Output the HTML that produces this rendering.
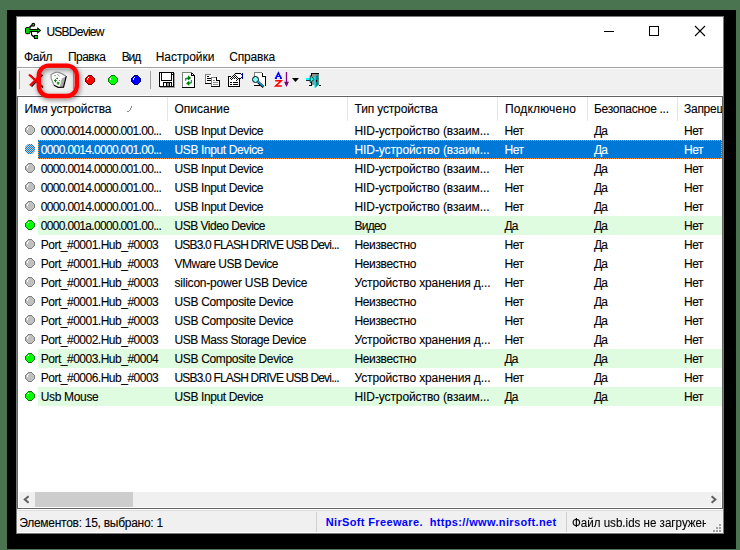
<!DOCTYPE html><html><head><meta charset="utf-8"><style>
html,body{margin:0;padding:0;width:740px;height:550px;overflow:hidden;background:#4a7450;position:relative}
.a{position:absolute}
.t{position:absolute;font-family:"Liberation Sans",sans-serif;font-size:12px;line-height:14px;white-space:pre;transform-origin:0 0;-webkit-text-stroke:0.1px currentColor}
svg{position:absolute;overflow:visible}
</style></head><body>
<div class="a" style="left:7px;top:10px;width:729px;height:539px;background:#000;"></div>
<div class="a" style="left:16px;top:16px;width:708px;height:518px;background:#7a7a7a;"></div>
<div class="a" style="left:17px;top:17px;width:706px;height:516px;background:#fff;"></div>
<div class="a" style="left:17px;top:67px;width:706px;height:1px;background:#a0a0a0;"></div>
<div class="a" style="left:18px;top:69px;width:704px;height:26px;background:#f0f0f0;"></div>
<div class="a" style="left:17px;top:96px;width:706px;height:413px;background:#646464;"></div>
<div class="a" style="left:18px;top:97px;width:704px;height:411px;background:#fff;"></div>
<div class="a" style="left:167px;top:97px;width:1px;height:24px;background:#e5e5e5;"></div>
<div class="a" style="left:347px;top:97px;width:1px;height:24px;background:#e5e5e5;"></div>
<div class="a" style="left:497px;top:97px;width:1px;height:24px;background:#e5e5e5;"></div>
<div class="a" style="left:587px;top:97px;width:1px;height:24px;background:#e5e5e5;"></div>
<div class="a" style="left:677px;top:97px;width:1px;height:24px;background:#e5e5e5;"></div>
<div class="a" style="left:38px;top:140px;width:684px;height:19px;background:#0078d7;"></div>
<div class="a" style="left:38px;top:216px;width:684px;height:19px;background:#e0fce0;"></div>
<div class="a" style="left:38px;top:349px;width:684px;height:19px;background:#e0fce0;"></div>
<div class="a" style="left:38px;top:387px;width:684px;height:19px;background:#e0fce0;"></div>
<div class="a" style="left:19px;top:492px;width:702px;height:15px;background:#f0f0f0;"></div>
<div class="a" style="left:35px;top:492px;width:98px;height:15px;background:#cdcdcd;"></div>
<div class="a" style="left:17px;top:510px;width:706px;height:1px;background:#dcdcdc;"></div>
<div class="a" style="left:17px;top:511px;width:706px;height:21px;background:#f0f0f0;"></div>
<div class="a" style="left:316px;top:512px;width:1px;height:20px;background:#d0d0d0;"></div>
<div class="a" style="left:566px;top:512px;width:1px;height:20px;background:#d0d0d0;"></div>
<svg width="740" height="550" style="left:0;top:0">
<defs>
<g id="bg" shape-rendering="crispEdges"><rect x="3" y="1" width="4" height="1" fill="#c0c0c0"/><rect x="2" y="2" width="6" height="1" fill="#c0c0c0"/><rect x="1" y="3" width="8" height="1" fill="#c0c0c0"/><rect x="1" y="4" width="8" height="1" fill="#c0c0c0"/><rect x="1" y="5" width="8" height="1" fill="#c0c0c0"/><rect x="1" y="6" width="8" height="1" fill="#c0c0c0"/><rect x="2" y="7" width="6" height="1" fill="#c0c0c0"/><rect x="3" y="8" width="4" height="1" fill="#c0c0c0"/><path d="M3 0h1v1h-1zM4 0h1v1h-1zM5 0h1v1h-1zM6 0h1v1h-1zM2 1h1v1h-1zM7 1h1v1h-1zM1 2h1v1h-1zM8 2h1v1h-1zM0 3h1v1h-1zM0 4h1v1h-1zM0 5h1v1h-1zM0 6h1v1h-1zM9 3h1v1h-1zM9 4h1v1h-1zM9 5h1v1h-1zM9 6h1v1h-1zM1 7h1v1h-1zM8 7h1v1h-1zM2 8h1v1h-1zM7 8h1v1h-1zM3 9h1v1h-1zM4 9h1v1h-1zM5 9h1v1h-1zM6 9h1v1h-1z" fill="#808080"/><path d="M3 2h1v1h-1zM2 3h1v2h-1z" fill="#fff"/></g>
<g id="bgr" shape-rendering="crispEdges"><rect x="3" y="1" width="4" height="1" fill="#00ff00"/><rect x="2" y="2" width="6" height="1" fill="#00ff00"/><rect x="1" y="3" width="8" height="1" fill="#00ff00"/><rect x="1" y="4" width="8" height="1" fill="#00ff00"/><rect x="1" y="5" width="8" height="1" fill="#00ff00"/><rect x="1" y="6" width="8" height="1" fill="#00ff00"/><rect x="2" y="7" width="6" height="1" fill="#00ff00"/><rect x="3" y="8" width="4" height="1" fill="#00ff00"/><path d="M3 0h1v1h-1zM4 0h1v1h-1zM5 0h1v1h-1zM6 0h1v1h-1zM2 1h1v1h-1zM7 1h1v1h-1zM1 2h1v1h-1zM8 2h1v1h-1zM0 3h1v1h-1zM0 4h1v1h-1zM0 5h1v1h-1zM0 6h1v1h-1zM9 3h1v1h-1zM9 4h1v1h-1zM9 5h1v1h-1zM9 6h1v1h-1zM1 7h1v1h-1zM8 7h1v1h-1zM2 8h1v1h-1zM7 8h1v1h-1zM3 9h1v1h-1zM4 9h1v1h-1zM5 9h1v1h-1zM6 9h1v1h-1z" fill="#008000"/><path d="M3 2h1v1h-1zM2 3h1v2h-1z" fill="#fff"/></g>
<g id="bred" shape-rendering="crispEdges"><rect x="3" y="1" width="4" height="1" fill="#ff0000"/><rect x="2" y="2" width="6" height="1" fill="#ff0000"/><rect x="1" y="3" width="8" height="1" fill="#ff0000"/><rect x="1" y="4" width="8" height="1" fill="#ff0000"/><rect x="1" y="5" width="8" height="1" fill="#ff0000"/><rect x="1" y="6" width="8" height="1" fill="#ff0000"/><rect x="2" y="7" width="6" height="1" fill="#ff0000"/><rect x="3" y="8" width="4" height="1" fill="#ff0000"/><path d="M3 0h1v1h-1zM4 0h1v1h-1zM5 0h1v1h-1zM6 0h1v1h-1zM2 1h1v1h-1zM7 1h1v1h-1zM1 2h1v1h-1zM8 2h1v1h-1zM0 3h1v1h-1zM0 4h1v1h-1zM0 5h1v1h-1zM0 6h1v1h-1zM9 3h1v1h-1zM9 4h1v1h-1zM9 5h1v1h-1zM9 6h1v1h-1zM1 7h1v1h-1zM8 7h1v1h-1zM2 8h1v1h-1zM7 8h1v1h-1zM3 9h1v1h-1zM4 9h1v1h-1zM5 9h1v1h-1zM6 9h1v1h-1z" fill="#800000"/><path d="M3 2h1v1h-1zM2 3h1v2h-1z" fill="#fff"/></g>
<g id="bblue" shape-rendering="crispEdges"><rect x="3" y="1" width="4" height="1" fill="#0000ff"/><rect x="2" y="2" width="6" height="1" fill="#0000ff"/><rect x="1" y="3" width="8" height="1" fill="#0000ff"/><rect x="1" y="4" width="8" height="1" fill="#0000ff"/><rect x="1" y="5" width="8" height="1" fill="#0000ff"/><rect x="1" y="6" width="8" height="1" fill="#0000ff"/><rect x="2" y="7" width="6" height="1" fill="#0000ff"/><rect x="3" y="8" width="4" height="1" fill="#0000ff"/><path d="M3 0h1v1h-1zM4 0h1v1h-1zM5 0h1v1h-1zM6 0h1v1h-1zM2 1h1v1h-1zM7 1h1v1h-1zM1 2h1v1h-1zM8 2h1v1h-1zM0 3h1v1h-1zM0 4h1v1h-1zM0 5h1v1h-1zM0 6h1v1h-1zM9 3h1v1h-1zM9 4h1v1h-1zM9 5h1v1h-1zM9 6h1v1h-1zM1 7h1v1h-1zM8 7h1v1h-1zM2 8h1v1h-1zM7 8h1v1h-1zM3 9h1v1h-1zM4 9h1v1h-1zM5 9h1v1h-1zM6 9h1v1h-1z" fill="#000080"/><path d="M3 2h1v1h-1zM2 3h1v2h-1z" fill="#fff"/></g>
<pattern id="dith" width="2" height="2" patternUnits="userSpaceOnUse"><rect width="2" height="2" fill="#0078d7"/><rect x="1" y="0" width="1" height="1" fill="#c8c8d0"/><rect x="0" y="1" width="1" height="1" fill="#c8c8d0"/></pattern>
<filter id="sh" x="-30%" y="-30%" width="160%" height="160%"><feGaussianBlur in="SourceAlpha" stdDeviation="1.6"/><feOffset dx="1" dy="2"/><feComponentTransfer><feFuncA type="linear" slope="0.45"/></feComponentTransfer><feMerge><feMergeNode/><feMergeNode in="SourceGraphic"/></feMerge></filter>
</defs>
<path d="M29.5 27.5L32 25" stroke="#000" stroke-width="1.7" fill="none"/>
<circle cx="33.3" cy="24.8" r="1.4" fill="#00e000" stroke="#000" stroke-width="1.1"/>
<rect x="25.5" y="27.5" width="4.6" height="6.2" rx="1.3" fill="#00d000" stroke="#000" stroke-width="1"/>
<g shape-rendering="crispEdges"><rect x="30" y="29" width="8" height="3" fill="#000"/><rect x="29" y="30" width="9" height="1" fill="#00c000"/></g>
<path d="M37.2 27L41.2 30.5L37.2 34Z" fill="#000"/><path d="M38 29.3L39.5 30.5L38 31.7Z" fill="#00e000"/>
<g shape-rendering="crispEdges"><rect x="31" y="32" width="1" height="3" fill="#000"/></g>
<path d="M31.5 34.8L34.3 37.2" stroke="#000" stroke-width="1.5" fill="none"/>
<g shape-rendering="crispEdges"><rect x="34" y="35" width="4" height="4" fill="#000"/><rect x="35" y="36" width="2" height="2" fill="#00e000"/></g>
<g shape-rendering="crispEdges"><rect x="604" y="31" width="10" height="1" fill="#000"/>
<rect x="649.5" y="26.5" width="9" height="9" fill="none" stroke="#000" stroke-width="1"/></g>
<path d="M695 26L705 36M705 26L695 36" stroke="#000" stroke-width="1.1" fill="none"/>
<g shape-rendering="crispEdges">
<rect x="19" y="71" width="1" height="18" fill="#a0a0a0"/>
<rect x="73" y="71" width="1" height="18" fill="#a0a0a0"/>
<rect x="150" y="71" width="1" height="18" fill="#a0a0a0"/>
</g>
<path d="M30.5 75.5L43 87.5M42.5 75L31.5 86.5" stroke="#000" stroke-width="1.6" fill="none"/>
<path d="M29 74.5L42 86.5M41.5 74L30 85.5" stroke="#f00" stroke-width="2.2" fill="none"/>
<path d="M51 74.5L55.5 72.3L58.5 72.3L65.8 76.2L63.3 87.3L58.2 87.5L54 85L51.2 78.4Z" fill="#fff"/>
<path d="M65.8 76.5L61.8 78.5L59.8 86.8L63.3 87.3Z" fill="#a8a8a8"/>
<path d="M54 85.2L51.2 78.4L51 74.5L55.5 72.3L58.5 72.3L62.5 74L65.8 76" stroke="#8a8a8a" stroke-width="1.1" fill="none"/>
<path d="M66.3 76.2L63.5 87.2L58.2 87.3L54 85.2" stroke="#000" stroke-width="1.2" fill="none"/>
<path d="M54 75.7h2M57.3 74l2.3 2.5" stroke="#9a9a9a" stroke-width="1" fill="none"/>
<path d="M54.2 80.5h2.5M55.4 79.2v3M56.7 83h3M58.1 81.8v3M56.4 78.3h1.6M59.6 80v0.8" stroke="#008000" stroke-width="1.2" fill="none"/>
<use href="#bred" x="85" y="75"/><use href="#bgr" x="108" y="75"/><use href="#bblue" x="131" y="75"/>
<g shape-rendering="crispEdges">
<rect x="174" y="73" width="1" height="15" fill="#a0a0a0"/><rect x="160" y="87" width="15" height="1" fill="#a0a0a0"/>
<rect x="159" y="72" width="15" height="15" fill="#000"/>
<rect x="160" y="73" width="1" height="13" fill="#fff"/><rect x="162" y="73" width="9" height="7" fill="#fff"/>
<rect x="160" y="81" width="13" height="1" fill="#fff"/><rect x="160" y="82" width="3" height="4" fill="#fff"/>
<rect x="172" y="75" width="1" height="11" fill="#fff"/><rect x="172" y="73" width="1" height="1" fill="#fff"/>
<rect x="164" y="83" width="2" height="3" fill="#fff"/><rect x="167" y="83" width="2" height="3" fill="#909090"/><rect x="170" y="83" width="1" height="3" fill="#fff"/>
</g>
<g shape-rendering="crispEdges">
<path d="M182 72h10l3 3v13h-13z" fill="#fff"/>
<rect x="182" y="72" width="1" height="16" fill="#808080"/><rect x="182" y="72" width="10" height="1" fill="#808080"/>
<rect x="194" y="75" width="1" height="13" fill="#000"/><rect x="182" y="87" width="13" height="1" fill="#000"/>
<rect x="191" y="73" width="1" height="3" fill="#000"/><rect x="191" y="75" width="4" height="1" fill="#000"/><rect x="192" y="73" width="1" height="1" fill="#000"/><rect x="193" y="74" width="1" height="1" fill="#000"/>
</g>
<path d="M185.6 80.8V78.6h1.2" stroke="#1a8aa0" stroke-width="1.3" fill="none"/><path d="M191.4 80v2.6h-1.2" stroke="#1a8aa0" stroke-width="1.3" fill="none"/>
<path d="M186.5 78.4H189.5M187.5 83.2H190.5" stroke="#008000" stroke-width="1.6" fill="none"/>
<path d="M188 75.3L191.2 77.9L188 80.5Z" fill="#008000"/><path d="M189.3 80.7L186 83.3L189.3 85.9Z" fill="#008000"/>
<g shape-rendering="crispEdges">
<path d="M205 74h6l2 2v8h-8z" fill="#fff"/>
<rect x="205" y="74" width="1" height="10" fill="#808080"/><rect x="205" y="74" width="6" height="1" fill="#808080"/><rect x="205" y="83" width="6" height="1" fill="#000"/>
<rect x="207" y="76" width="2" height="1" fill="#000"/><rect x="207" y="78" width="4" height="1" fill="#000"/><rect x="207" y="80" width="4" height="1" fill="#000"/>
<path d="M211 77h6l3 3v7h-9z" fill="#fff"/>
<rect x="211" y="77" width="1" height="10" fill="#808080"/><rect x="211" y="77" width="6" height="1" fill="#808080"/>
<rect x="219" y="80" width="1" height="7" fill="#000"/><rect x="211" y="86" width="9" height="1" fill="#000"/>
<rect x="216" y="77" width="1" height="3" fill="#000"/><rect x="216" y="80" width="3" height="1" fill="#000"/>
<rect x="213" y="80" width="2" height="1" fill="#909090"/><rect x="213" y="82" width="5" height="1" fill="#909090"/><rect x="213" y="84" width="5" height="1" fill="#909090"/>
</g>
<g shape-rendering="crispEdges">
<rect x="228" y="76" width="12" height="11" fill="#000"/><rect x="229" y="77" width="10" height="9" fill="#fff"/>
<rect x="231" y="76" width="8" height="1" fill="#fff"/><rect x="239" y="76" width="1" height="2" fill="#f0f0f0"/>
<rect x="230" y="82" width="2" height="1" fill="#000"/><rect x="233" y="82" width="5" height="1" fill="#000"/><rect x="230" y="84" width="2" height="1" fill="#000"/><rect x="233" y="84" width="5" height="1" fill="#000"/>
<rect x="235" y="73" width="6" height="1" fill="#000"/><rect x="236" y="74" width="5" height="4" fill="#fff"/><rect x="238" y="78" width="3" height="1" fill="#000"/><rect x="241" y="74" width="1" height="1" fill="#000"/><rect x="241" y="77" width="1" height="1" fill="#000"/><rect x="242" y="73" width="1" height="6" fill="#000090"/>
<path d="M230 78h1v1h-1zM231 77h1v1h-1zM231 79h1v1h-1zM232 76h1v1h-1zM232 78h1v1h-1zM233 75h1v1h-1zM233 77h1v1h-1zM234 74h1v1h-1zM234 76h1v1h-1zM234 78h1v1h-1zM235 75h1v1h-1zM235 77h1v1h-1zM236 76h1v1h-1zM236 78h1v1h-1zM236 80h1v1h-1zM237 77h1v1h-1zM237 79h1v1h-1zM238 78h1v1h-1z" fill="#000"/>
</g>
<g shape-rendering="crispEdges">
<path d="M254 72h8l4 4v10h-12z" fill="#fff"/>
<rect x="254" y="72" width="8" height="1" fill="#808080"/><rect x="254" y="72" width="1" height="5" fill="#808080"/>
<rect x="265" y="76" width="1" height="10" fill="#000"/><rect x="254" y="85" width="6" height="1" fill="#000"/>
<rect x="262" y="73" width="1" height="3" fill="#000"/><rect x="262" y="76" width="3" height="1" fill="#000"/>
</g>
<circle cx="255.5" cy="79.5" r="3" fill="#80ffff" stroke="#000" stroke-width="1"/>
<path d="M258 82l5.5 5" stroke="#000" stroke-width="2.4"/><path d="M258 81.6l5.5 5" stroke="#00c0ff" stroke-width="1.2"/>
<path d="M275.6 78.3L278.4 72.8L281.2 78.3" stroke="#0000ff" stroke-width="1.5" fill="none"/><path d="M274.8 78.4h2.2M279.8 78.4h2.2M276.7 76.5h3.4" stroke="#0000ff" stroke-width="1.1"/>
<path d="M275.2 80.8h6L275.6 86.1h6.2" stroke="#ff0000" stroke-width="1.5" fill="none"/>
<path d="M286.5 72v13" stroke="#800080" stroke-width="1.3"/><path d="M284 81.8l2.5 5.1l2.5-5.1z" fill="#800080"/>
<path d="M292 78h7l-3.5 4z" fill="#000"/>
<g shape-rendering="crispEdges">
<rect x="311" y="73" width="8" height="1" fill="#000"/><rect x="311" y="73" width="1" height="3" fill="#000"/><rect x="311" y="82" width="1" height="4" fill="#000"/>
<rect x="309" y="85" width="3" height="1" fill="#000"/><rect x="319" y="85" width="2" height="1" fill="#000"/>
<rect x="312" y="74" width="7" height="11" fill="#909090"/>
</g>
<path d="M315 76.5l3.5-2.5v11l-3.5 3z" fill="#008c8c"/><path d="M315 76.5v11.5" stroke="#00ffff" stroke-width="1.2"/><rect x="316" y="80" width="1" height="2" fill="#000" shape-rendering="crispEdges"/>
<path d="M306 79.6h5" stroke="#000" stroke-width="2.6"/><path d="M306 79h5" stroke="#00ffff" stroke-width="2.2"/><path d="M310.2 75.6l4 3.6l-4 3.6z" fill="#00ffff" stroke="#000" stroke-width="0.7"/>
<path d="M127 111h2v1h-2zM129 110h1v1h-1zM130 108h1v2h-1zM131 106h1v2h-1z" fill="#8a8a8a" shape-rendering="crispEdges"/>
<use href="#bg" x="25" y="125"/>
<g transform="translate(25 144)"><use href="#bg"/><path d="M3 0h4l3 3v4l-3 3h-4l-3-3v-4z" fill="url(#dith)" opacity="0.9"/></g>
<use href="#bg" x="25" y="163"/>
<use href="#bg" x="25" y="182"/>
<use href="#bg" x="25" y="201"/>
<use href="#bgr" x="25" y="220"/>
<use href="#bg" x="25" y="239"/>
<use href="#bg" x="25" y="258"/>
<use href="#bg" x="25" y="277"/>
<use href="#bg" x="25" y="296"/>
<use href="#bg" x="25" y="315"/>
<use href="#bg" x="25" y="334"/>
<use href="#bgr" x="25" y="353"/>
<use href="#bg" x="25" y="372"/>
<use href="#bgr" x="25" y="391"/>
<rect x="38.5" y="140.5" width="683" height="18" fill="none" stroke="#ff9a3c" stroke-width="1" stroke-dasharray="1 1" shape-rendering="crispEdges"/>
<path d="M28.6 496.3L24.8 499.5L28.6 502.7" stroke="#606060" stroke-width="2" fill="none"/>
<path d="M711.6 496.3L715.4 499.5L711.6 502.7" stroke="#606060" stroke-width="2" fill="none"/>
<g fill="#a0a0a0" shape-rendering="crispEdges">
<rect x="719" y="524" width="2" height="2"/>
<rect x="716" y="527" width="2" height="2"/>
<rect x="719" y="527" width="2" height="2"/>
<rect x="713" y="530" width="2" height="2"/>
<rect x="716" y="530" width="2" height="2"/>
<rect x="719" y="530" width="2" height="2"/>
</g>
</svg>
<div class="t" style="left:46.40px;top:25.44px;color:#000;letter-spacing:-0.754px;">USBDeview</div>
<div class="t" style="left:24.10px;top:50.44px;color:#000;letter-spacing:-0.372px;">Файл</div>
<div class="t" style="left:67.90px;top:50.44px;color:#000;letter-spacing:-0.509px;">Правка</div>
<div class="t" style="left:121.70px;top:50.44px;color:#000;letter-spacing:-1.109px;">Вид</div>
<div class="t" style="left:155.70px;top:50.44px;color:#000;">Настройки</div>
<div class="t" style="left:229.20px;top:50.44px;color:#000;letter-spacing:-0.180px;">Справка</div>
<div class="t" style="left:24.50px;top:101.54px;color:#000;letter-spacing:-0.118px;">Имя устройства</div>
<div class="t" style="left:174.50px;top:101.54px;color:#000;">Описание</div>
<div class="t" style="left:354.60px;top:101.54px;color:#000;letter-spacing:-0.167px;">Тип устройства</div>
<div class="t" style="left:504.90px;top:101.54px;color:#000;letter-spacing:0.179px;">Подключено</div>
<div class="t" style="left:594.00px;top:101.54px;color:#000;letter-spacing:-0.293px;">Безопасное ...</div>
<div class="t" style="left:684.00px;top:101.54px;color:#000;letter-spacing:-0.270px;">Запрещ</div>
<div class="t" style="left:40.80px;top:124.34px;color:#000;letter-spacing:-0.687px;">0000.0014.0000.001.00...</div>
<div class="t" style="left:174.50px;top:124.34px;color:#000;letter-spacing:-0.381px;">USB Input Device</div>
<div class="t" style="left:354.50px;top:124.34px;color:#000;letter-spacing:-0.095px;">HID-устройство (взаим...</div>
<div class="t" style="left:504.50px;top:124.34px;color:#000;letter-spacing:-0.469px;">Нет</div>
<div class="t" style="left:594.00px;top:124.34px;color:#000;letter-spacing:-0.812px;">Да</div>
<div class="t" style="left:684.00px;top:124.34px;color:#000;letter-spacing:-0.469px;">Нет</div>
<div class="t" style="left:40.80px;top:143.34px;color:#fff;letter-spacing:-0.687px;">0000.0014.0000.001.00...</div>
<div class="t" style="left:174.50px;top:143.34px;color:#fff;letter-spacing:-0.381px;">USB Input Device</div>
<div class="t" style="left:354.50px;top:143.34px;color:#fff;letter-spacing:-0.095px;">HID-устройство (взаим...</div>
<div class="t" style="left:504.50px;top:143.34px;color:#fff;letter-spacing:-0.469px;">Нет</div>
<div class="t" style="left:594.00px;top:143.34px;color:#fff;letter-spacing:-0.812px;">Да</div>
<div class="t" style="left:684.00px;top:143.34px;color:#fff;letter-spacing:-0.469px;">Нет</div>
<div class="t" style="left:40.80px;top:162.34px;color:#000;letter-spacing:-0.687px;">0000.0014.0000.001.00...</div>
<div class="t" style="left:174.50px;top:162.34px;color:#000;letter-spacing:-0.381px;">USB Input Device</div>
<div class="t" style="left:354.50px;top:162.34px;color:#000;letter-spacing:-0.095px;">HID-устройство (взаим...</div>
<div class="t" style="left:504.50px;top:162.34px;color:#000;letter-spacing:-0.469px;">Нет</div>
<div class="t" style="left:594.00px;top:162.34px;color:#000;letter-spacing:-0.812px;">Да</div>
<div class="t" style="left:684.00px;top:162.34px;color:#000;letter-spacing:-0.469px;">Нет</div>
<div class="t" style="left:40.80px;top:181.34px;color:#000;letter-spacing:-0.687px;">0000.0014.0000.001.00...</div>
<div class="t" style="left:174.50px;top:181.34px;color:#000;letter-spacing:-0.381px;">USB Input Device</div>
<div class="t" style="left:354.50px;top:181.34px;color:#000;letter-spacing:-0.095px;">HID-устройство (взаим...</div>
<div class="t" style="left:504.50px;top:181.34px;color:#000;letter-spacing:-0.469px;">Нет</div>
<div class="t" style="left:594.00px;top:181.34px;color:#000;letter-spacing:-0.812px;">Да</div>
<div class="t" style="left:684.00px;top:181.34px;color:#000;letter-spacing:-0.469px;">Нет</div>
<div class="t" style="left:40.80px;top:200.34px;color:#000;letter-spacing:-0.687px;">0000.0014.0000.001.00...</div>
<div class="t" style="left:174.50px;top:200.34px;color:#000;letter-spacing:-0.381px;">USB Input Device</div>
<div class="t" style="left:354.50px;top:200.34px;color:#000;letter-spacing:-0.095px;">HID-устройство (взаим...</div>
<div class="t" style="left:504.50px;top:200.34px;color:#000;letter-spacing:-0.469px;">Нет</div>
<div class="t" style="left:594.00px;top:200.34px;color:#000;letter-spacing:-0.812px;">Да</div>
<div class="t" style="left:684.00px;top:200.34px;color:#000;letter-spacing:-0.469px;">Нет</div>
<div class="t" style="left:40.80px;top:219.34px;color:#000;letter-spacing:-0.687px;">0000.001a.0000.001.00...</div>
<div class="t" style="left:174.50px;top:219.34px;color:#000;letter-spacing:-0.500px;">USB Video Device</div>
<div class="t" style="left:354.50px;top:219.34px;color:#000;letter-spacing:-0.766px;">Видео</div>
<div class="t" style="left:504.50px;top:219.34px;color:#000;letter-spacing:-0.812px;">Да</div>
<div class="t" style="left:594.00px;top:219.34px;color:#000;letter-spacing:-0.812px;">Да</div>
<div class="t" style="left:684.00px;top:219.34px;color:#000;letter-spacing:-0.469px;">Нет</div>
<div class="t" style="left:40.80px;top:238.34px;color:#000;letter-spacing:-0.498px;">Port_#0001.Hub_#0003</div>
<div class="t" style="left:174.50px;top:238.34px;color:#000;letter-spacing:-0.818px;">USB3.0 FLASH DRIVE USB Devi...</div>
<div class="t" style="left:354.50px;top:238.34px;color:#000;letter-spacing:-0.363px;">Неизвестно</div>
<div class="t" style="left:504.50px;top:238.34px;color:#000;letter-spacing:-0.469px;">Нет</div>
<div class="t" style="left:594.00px;top:238.34px;color:#000;letter-spacing:-0.812px;">Да</div>
<div class="t" style="left:684.00px;top:238.34px;color:#000;letter-spacing:-0.469px;">Нет</div>
<div class="t" style="left:40.80px;top:257.34px;color:#000;letter-spacing:-0.498px;">Port_#0001.Hub_#0003</div>
<div class="t" style="left:174.50px;top:257.34px;color:#000;letter-spacing:-0.502px;">VMware USB Device</div>
<div class="t" style="left:354.50px;top:257.34px;color:#000;letter-spacing:-0.363px;">Неизвестно</div>
<div class="t" style="left:504.50px;top:257.34px;color:#000;letter-spacing:-0.469px;">Нет</div>
<div class="t" style="left:594.00px;top:257.34px;color:#000;letter-spacing:-0.812px;">Да</div>
<div class="t" style="left:684.00px;top:257.34px;color:#000;letter-spacing:-0.469px;">Нет</div>
<div class="t" style="left:40.80px;top:276.34px;color:#000;letter-spacing:-0.498px;">Port_#0001.Hub_#0003</div>
<div class="t" style="left:174.50px;top:276.34px;color:#000;letter-spacing:-0.219px;">silicon-power USB Device</div>
<div class="t" style="left:354.50px;top:276.34px;color:#000;letter-spacing:-0.128px;">Устройство хранения д...</div>
<div class="t" style="left:504.50px;top:276.34px;color:#000;letter-spacing:-0.469px;">Нет</div>
<div class="t" style="left:594.00px;top:276.34px;color:#000;letter-spacing:-0.812px;">Да</div>
<div class="t" style="left:684.00px;top:276.34px;color:#000;letter-spacing:-0.469px;">Нет</div>
<div class="t" style="left:40.80px;top:295.34px;color:#000;letter-spacing:-0.498px;">Port_#0001.Hub_#0003</div>
<div class="t" style="left:174.50px;top:295.34px;color:#000;letter-spacing:-0.336px;">USB Composite Device</div>
<div class="t" style="left:354.50px;top:295.34px;color:#000;letter-spacing:-0.363px;">Неизвестно</div>
<div class="t" style="left:504.50px;top:295.34px;color:#000;letter-spacing:-0.469px;">Нет</div>
<div class="t" style="left:594.00px;top:295.34px;color:#000;letter-spacing:-0.812px;">Да</div>
<div class="t" style="left:684.00px;top:295.34px;color:#000;letter-spacing:-0.469px;">Нет</div>
<div class="t" style="left:40.80px;top:314.34px;color:#000;letter-spacing:-0.498px;">Port_#0001.Hub_#0003</div>
<div class="t" style="left:174.50px;top:314.34px;color:#000;letter-spacing:-0.336px;">USB Composite Device</div>
<div class="t" style="left:354.50px;top:314.34px;color:#000;letter-spacing:-0.363px;">Неизвестно</div>
<div class="t" style="left:504.50px;top:314.34px;color:#000;letter-spacing:-0.469px;">Нет</div>
<div class="t" style="left:594.00px;top:314.34px;color:#000;letter-spacing:-0.812px;">Да</div>
<div class="t" style="left:684.00px;top:314.34px;color:#000;letter-spacing:-0.469px;">Нет</div>
<div class="t" style="left:40.80px;top:333.34px;color:#000;letter-spacing:-0.498px;">Port_#0002.Hub_#0003</div>
<div class="t" style="left:174.50px;top:333.34px;color:#000;letter-spacing:-0.457px;">USB Mass Storage Device</div>
<div class="t" style="left:354.50px;top:333.34px;color:#000;letter-spacing:-0.128px;">Устройство хранения д...</div>
<div class="t" style="left:504.50px;top:333.34px;color:#000;letter-spacing:-0.469px;">Нет</div>
<div class="t" style="left:594.00px;top:333.34px;color:#000;letter-spacing:-0.812px;">Да</div>
<div class="t" style="left:684.00px;top:333.34px;color:#000;letter-spacing:-0.469px;">Нет</div>
<div class="t" style="left:40.80px;top:352.34px;color:#000;letter-spacing:-0.498px;">Port_#0003.Hub_#0004</div>
<div class="t" style="left:174.50px;top:352.34px;color:#000;letter-spacing:-0.336px;">USB Composite Device</div>
<div class="t" style="left:354.50px;top:352.34px;color:#000;letter-spacing:-0.363px;">Неизвестно</div>
<div class="t" style="left:504.50px;top:352.34px;color:#000;letter-spacing:-0.812px;">Да</div>
<div class="t" style="left:594.00px;top:352.34px;color:#000;letter-spacing:-0.812px;">Да</div>
<div class="t" style="left:684.00px;top:352.34px;color:#000;letter-spacing:-0.469px;">Нет</div>
<div class="t" style="left:40.80px;top:371.34px;color:#000;letter-spacing:-0.498px;">Port_#0006.Hub_#0003</div>
<div class="t" style="left:174.50px;top:371.34px;color:#000;letter-spacing:-0.818px;">USB3.0 FLASH DRIVE USB Devi...</div>
<div class="t" style="left:354.50px;top:371.34px;color:#000;letter-spacing:-0.128px;">Устройство хранения д...</div>
<div class="t" style="left:504.50px;top:371.34px;color:#000;letter-spacing:-0.469px;">Нет</div>
<div class="t" style="left:594.00px;top:371.34px;color:#000;letter-spacing:-0.812px;">Да</div>
<div class="t" style="left:684.00px;top:371.34px;color:#000;letter-spacing:-0.469px;">Нет</div>
<div class="t" style="left:40.80px;top:390.34px;color:#000;letter-spacing:-0.338px;">Usb Mouse</div>
<div class="t" style="left:174.50px;top:390.34px;color:#000;letter-spacing:-0.381px;">USB Input Device</div>
<div class="t" style="left:354.50px;top:390.34px;color:#000;letter-spacing:-0.095px;">HID-устройство (взаим...</div>
<div class="t" style="left:504.50px;top:390.34px;color:#000;letter-spacing:-0.812px;">Да</div>
<div class="t" style="left:594.00px;top:390.34px;color:#000;letter-spacing:-0.812px;">Да</div>
<div class="t" style="left:684.00px;top:390.34px;color:#000;letter-spacing:-0.469px;">Нет</div>
<div class="t" style="left:19.20px;top:516.14px;color:#000;letter-spacing:-0.268px;">Элементов: 15, выбрано: 1</div>
<div class="t" style="left:325.70px;top:515.14px;color:#0000ff;font-size:11px;font-weight:bold;-webkit-text-stroke:0;letter-spacing:0.355px;">NirSoft Freeware.  https://www.nirsoft.net</div>
<div class="a" style="left:571.50px;top:514.14px;width:134.80px;height:18px;overflow:hidden"><div class="t" style="left:0;top:2px;color:#000;transform:scaleX(0.9647)">Файл usb.ids не загружен</div></div>
<div class="a" style="left:722px;top:97px;width:1px;height:411px;background:#646464;"></div>
<div class="a" style="left:723px;top:16px;width:1px;height:518px;background:#7a7a7a;"></div>
<div class="a" style="left:724px;top:10px;width:12px;height:539px;background:#000;"></div>
<svg width="740" height="550" style="left:0;top:0">
<defs><filter id="sh2" x="-50%" y="-50%" width="200%" height="200%"><feGaussianBlur in="SourceAlpha" stdDeviation="2.4"/><feOffset dx="0.5" dy="2"/><feComponentTransfer><feFuncA type="linear" slope="0.5"/></feComponentTransfer><feMerge><feMergeNode/><feMergeNode in="SourceGraphic"/></feMerge></filter></defs>
<rect x="38.8" y="65.6" width="38" height="30.4" rx="10" ry="10" fill="none" stroke="#ff0000" stroke-width="4.4" filter="url(#sh2)"/>
</svg>
</body></html>
